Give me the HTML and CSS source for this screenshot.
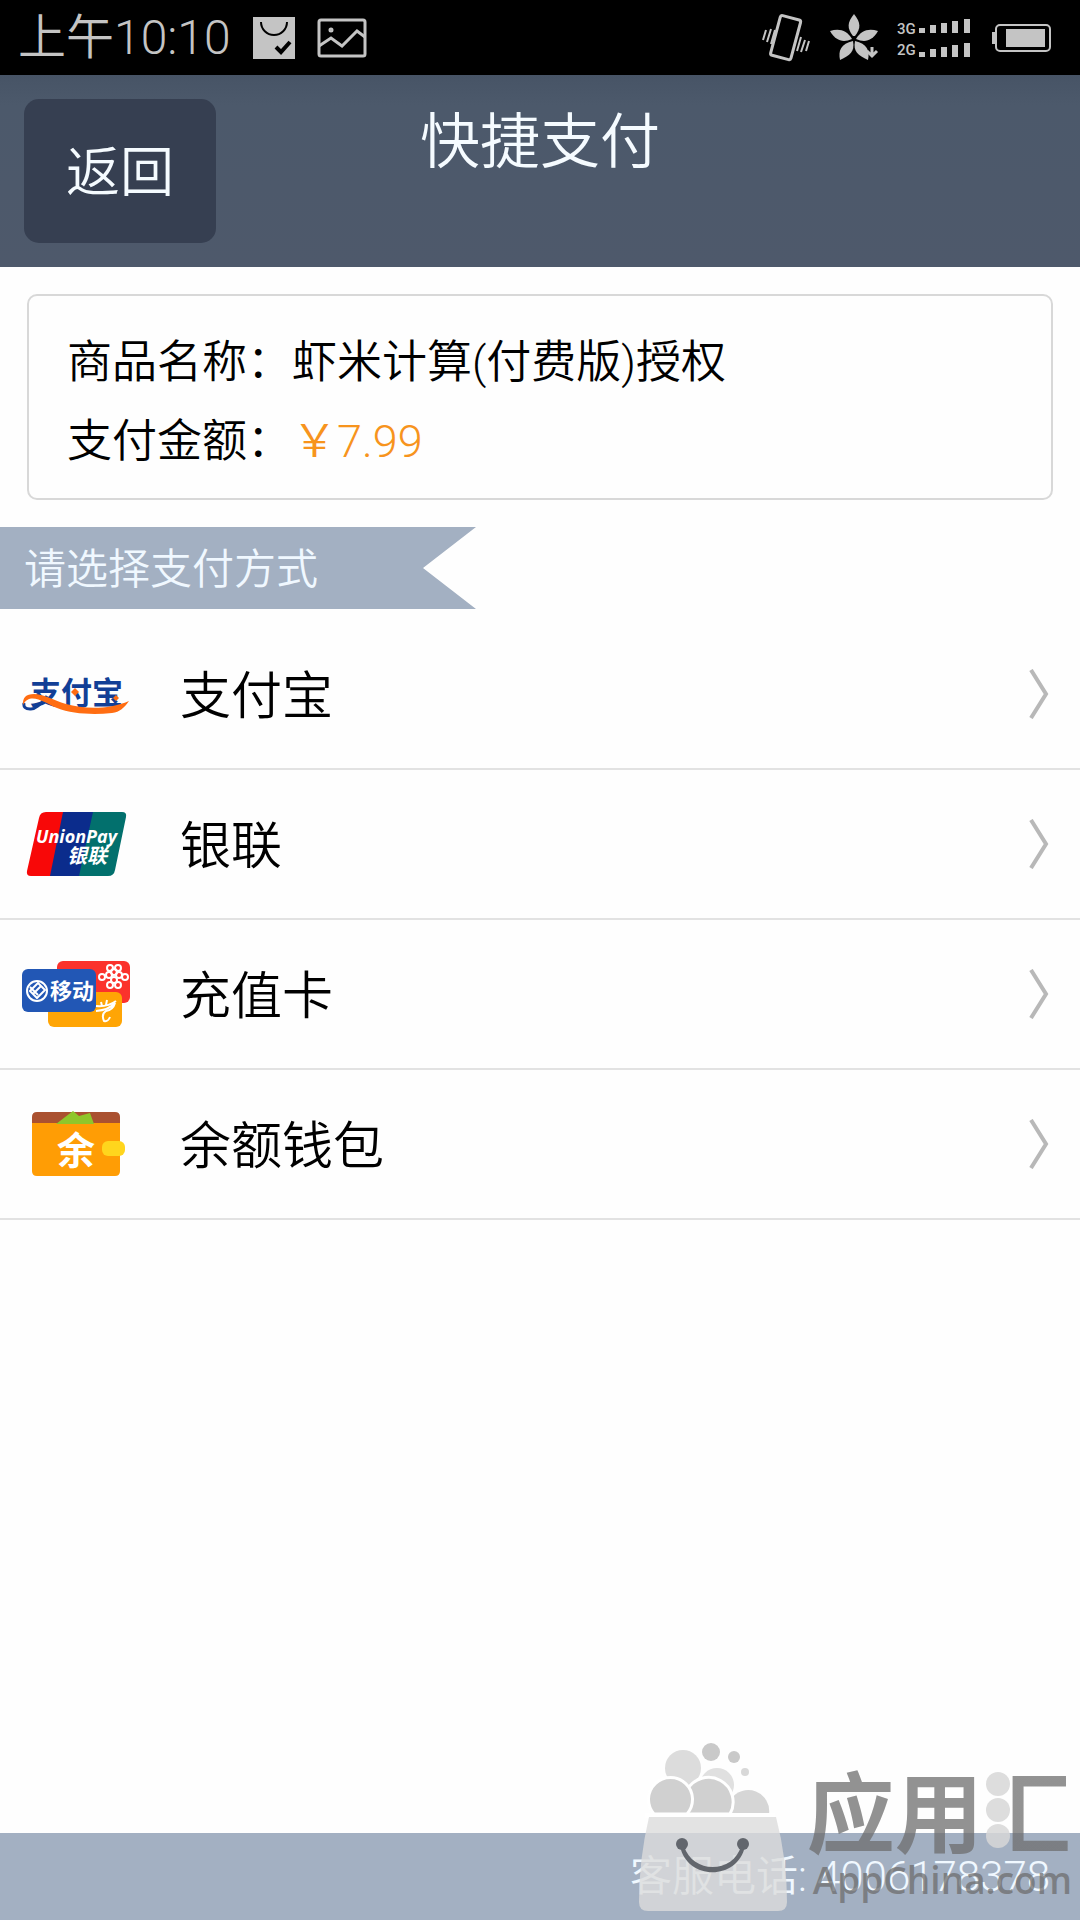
FILE: index.html
```html
<!DOCTYPE html>
<html lang="zh-CN">
<head>
    <meta charset="UTF-8">
    <meta name="viewport" content="width=device-width, initial-scale=1.0">
    <title>快捷支付</title>
    <link rel="stylesheet" href="styles.css">
</head>
<body>

<div class="status-bar">
    <div class="status-left">
        <span class="time">上午10:10</span>
        <svg class="status-icon" width="42" height="42" viewBox="0 0 42 42">
            <rect width="42" height="42" fill="#c4c4c4"/>
            <path d="M8 5a13 13 0 0 0 26 0" fill="none" stroke="#000" stroke-width="2"/>
            <path d="M23 30l5 5 9-10" fill="none" stroke="#000" stroke-width="4"/>
        </svg>
        <svg class="status-icon" width="50" height="40" viewBox="0 0 50 40" fill="none" stroke="#c4c4c4" stroke-width="3">
            <rect x="2" y="2" width="46" height="36" rx="2"/>
            <path d="M2 28l12-8 11 8 15-15 8 6"/>
            <circle cx="14" cy="12" r="1" fill="#c4c4c4"/>
        </svg>
    </div>
    <div class="status-right">
        <svg width="50" height="50" viewBox="0 0 50 50" fill="none" stroke="#c4c4c4">
            <rect x="14" y="4" width="21" height="41" rx="2" transform="rotate(15 24 25)" stroke-width="3"/>
            <path d="M5 17l-3 10M10 16l-4 13M14 17l-4 14M40 24l-4 14M44 27l-4 12M48 28l-3 10" stroke-width="2"/>
        </svg>
        <svg width="50" height="50" viewBox="0 0 50 50" fill="#c4c4c4">
            <path d="M25 1c-7 9-7 14-1 22h2c6-8 6-13-1-22z"/>
            <path d="M1 18c9-3 17-1 22 8-9 4-16 2-22-8z"/>
            <path d="M49 18c-9-3-17-1-22 8 9 4 16 2 22-8z"/>
            <path d="M11 47c-2-10 1-16 13-19 2 11-3 14-13 19z"/>
            <path d="M39 47c2-10-1-16-13-19-2 11 3 14 13 19z"/>
            <path d="M43 34v8M38 38l5 5 5-5" fill="none" stroke="#c4c4c4" stroke-width="3"/>
        </svg>
        <svg width="76" height="42" viewBox="0 0 76 42" fill="#c4c4c4">
            <text class="signal-text" x="0" y="17">3G</text>
            <text class="signal-text" x="0" y="38">2G</text>
            <path d="M22 11h6v5h-6zM33 8h6v8h-6zM44 6h6v10h-6zM55 4h6v12h-6zM67 2h6v14h-6z"/>
            <path d="M22 35h6v5h-6zM33 32h6v8h-6zM44 30h6v10h-6zM55 28h6v12h-6zM67 26h6v14h-6z"/>
        </svg>
        <svg width="60" height="28" viewBox="0 0 60 28">
            <rect x="5" y="1" width="54" height="26" rx="4" fill="none" stroke="#c4c4c4" stroke-width="2"/>
            <path d="M1 8h3v12h-3zM15 5h39v18h-39z" fill="#c4c4c4"/>
        </svg>
    </div>
</div>

<header class="header">
    <button type="button" class="back">返回</button>
    <h1 class="title">快捷支付</h1>
</header>

<main>
    <section class="order">
        <p>商品名称：虾米计算(付费版)授权</p>
        <p>支付金额：<span class="price">￥7.99</span></p>
    </section>

    <h2 class="ribbon">请选择支付方式</h2>

    <nav class="pay-list">
        <a class="pay-item" href="#alipay">
            <svg class="logo" width="108" height="68" viewBox="0 0 108 68">
                <text class="alipay-text" x="8" y="44">支付宝</text>
                <path d="M25 36Q15 50 8 49 1 49 2 43" fill="none" stroke="#123f96" stroke-width="3"/>
                <path d="M1 45Q0 34 12 34c9 0 19 6 32 10 18 5 42 6 63-3-5 7-9 11-17 12-19 2-40 1-55-5C23 43 8 31 1 45z" fill="#ff6d12"/>
                <path d="M53 28l4 4-4 4-4-4zM94 35l3 3-3 3-3-3z" fill="#ff6d12"/>
            </svg>
            <span class="pay-name">支付宝</span>
            <svg class="arrow" width="20" height="50" viewBox="0 0 20 50"><path d="M2 1l15 24L2 49"/></svg>
        </a>
        <a class="pay-item" href="#unionpay">
            <svg class="logo" width="108" height="68" viewBox="0 0 108 68">
                <path d="M24 2h18L29 66H9q-5 0-4-5L17 8q1-6 7-6z" fill="#f80808"/>
                <path d="M41 2h31L59 66H28z" fill="#0b2c8c"/>
                <path d="M71 2h29q5 0 4 5L93 60q-1 6-7 6H57z" fill="#02706d"/>
                <text class="union-text" x="14" y="33">UnionPay</text>
                <text class="union-cn" x="45" y="53">银联</text>
            </svg>
            <span class="pay-name">银联</span>
            <svg class="arrow" width="20" height="50" viewBox="0 0 20 50"><path d="M2 1l15 24L2 49"/></svg>
        </a>
        <a class="pay-item" href="#card">
            <svg class="logo" width="108" height="68" viewBox="0 0 108 68">
                <rect x="35" y="1" width="73" height="42" rx="6" fill="#fb322c"/>
                <rect x="26" y="32" width="74" height="35" rx="6" fill="#ffa505"/>
                <rect y="9" width="74" height="43" rx="6" fill="#2257b5"/>
                <g fill="none" stroke="#fff" stroke-width="2">
                    <circle cx="88" cy="8" r="3"/><circle cx="96" cy="8" r="3"/>
                    <circle cx="80" cy="17" r="3"/><circle cx="87" cy="15" r="3"/><circle cx="97" cy="15" r="3"/><circle cx="103" cy="17" r="3"/>
                    <circle cx="92" cy="12" r="3"/><circle cx="92" cy="20" r="3"/><circle cx="88" cy="25" r="3"/><circle cx="96" cy="25" r="3"/>
                    <circle cx="15" cy="31" r="10"/>
                    <path d="M8 31l8-8 7 7-8 8zM11 34l8-8M8 27l8 8"/>
                </g>
                <path d="M74 46q12 1 20-5M79 42l1 4M85 40l-1 5M74 51q13-1 19-8-2 7-9 8-5 3-2 10 4 1 6-4" fill="none" stroke="#fff" stroke-width="2"/>
                <text class="mobile-text" x="28" y="39">移动</text>
            </svg>
            <span class="pay-name">充值卡</span>
            <svg class="arrow" width="20" height="50" viewBox="0 0 20 50"><path d="M2 1l15 24L2 49"/></svg>
        </a>
        <a class="pay-item" href="#wallet">
            <svg class="logo" width="108" height="68" viewBox="0 0 108 68">
                <path d="M15 2h78q5 0 5 5v10H10V7q0-5 5-5z" fill="#aa5130"/>
                <path d="M10 13h88v48q0 5-5 5H15q-5 0-5-5z" fill="#ff9d05"/>
                <path d="M34 14L51 1l6 5 11-3 4 11z" fill="#8fc62b"/>
                <rect x="80" y="31" width="23" height="15" rx="6" fill="#ffd51d"/>
                <text class="wallet-text" x="35" y="54">余</text>
            </svg>
            <span class="pay-name">余额钱包</span>
            <svg class="arrow" width="20" height="50" viewBox="0 0 20 50"><path d="M2 1l15 24L2 49"/></svg>
        </a>
    </nav>
</main>

<footer class="footer">
    <span>客服电话: 4006178378</span>
</footer>

<!-- 水印 -->
<div class="watermark">
    <svg class="bag" width="152" height="170" viewBox="0 0 152 170">
        <g fill="#d0d0d0">
            <circle cx="74" cy="10" r="9" fill="#c9c9c9"/>
            <circle cx="97" cy="15" r="6" fill="#c9c9c9"/>
            <circle cx="108" cy="30" r="4" fill="#d8d8d8"/>
            <circle cx="46" cy="26" r="18" fill="#dcdcdc"/>
            <circle cx="80" cy="43" r="17" fill="#e0e0e0"/>
            <path d="M94 72V57a21 21 0 0 1 38 15z" fill="#d6d6d6"/>
            <path d="M50 72V48a22 22 0 1 1 43 24z" stroke="#fff" stroke-width="3"/>
            <path d="M17 72a22 22 0 1 1 33 0z" stroke="#fff" stroke-width="3"/>
        </g>
        <path d="M8 71h130v5H8z" fill="#fff"/>
        <path d="M12 75h127q11 42 11 85 0 9-9 9H11q-9 0-9-9Q2 117 12 75z" fill="#dcdcdc" fill-opacity=".8"/>
        <g fill="#62666d">
            <circle cx="45" cy="102" r="6"/>
            <circle cx="106" cy="102" r="6"/>
            <path d="M43 104h4c9 29 50 27 57 0h4c-7 35-58 35-65 0z"/>
        </g>
    </svg>
    <div class="brand">
        <div class="brand-cn">应用<span class="brand-hui">汇<svg class="dots" width="26" height="80" viewBox="0 0 26 80"><circle cx="13" cy="13" r="12"/><circle cx="13" cy="39" r="12"/><circle cx="13" cy="65" r="12"/></svg></span></div>
        <div class="brand-en">AppChina.com</div>
    </div>
</div>

</body>
</html>
```
FILE: styles.css
```css
* {
    box-sizing: border-box;
}
body {
    margin: 0;
    min-height: 100vh;
    display: flex;
    flex-direction: column;
    position: relative;
    background-color: #fefefe;
    color: #000;
    font-family: Roboto, "Noto Sans CJK SC", sans-serif;
    font-weight: 350;
}
h1, h2, p {
    margin: 0;
    font-weight: 350;
}
main {
    flex: 1;
}

/* 状态栏 */
.status-bar {
    display: flex;
    justify-content: space-between;
    align-items: center;
    height: 75px;
    padding: 0 29px 0 18px;
    background-color: #000;
    color: #c4c4c4;
}
.status-left, .status-right {
    display: flex;
    align-items: center;
}
.status-left {
    gap: 22px;
}
.status-right {
    gap: 18px;
}
.time {
    font-size: 48px;
    line-height: 72px;
}
.signal-text {
    font-family: Roboto, sans-serif;
    font-size: 15px;
    font-weight: 500;
}

/* 标题栏 */
.header {
    display: grid;
    grid-template-columns: 1fr auto 1fr;
    align-items: start;
    height: 192px;
    padding: 24px;
    background: linear-gradient(#475466, #4c596b 30px, #4e596b);
    color: #f5fbff;
}
.back {
    justify-self: start;
    width: 192px;
    height: 144px;
    padding: 0 0 6px;
    border: none;
    border-radius: 15px;
    background-color: #363f51;
    color: #f5fbff;
    font-family: inherit;
    font-size: 54px;
    font-weight: 350;
}
.title {
    font-size: 60px;
    line-height: 88px;
}

/* 订单信息 */
.order {
    margin: 27px 27px 27px;
    padding: 27px 38px 17px;
    border: 2px solid #d8d8d8;
    border-radius: 10px;
    font-size: 45px;
    line-height: 79px;
}
.price {
    color: #f7941d;
}
.ribbon {
    width: 476px;
    padding: 4px 0 0 24px;
    background-color: #a3b0c2;
    clip-path: polygon(0 0, 100% 0, 423px 50%, 100% 100%, 0 100%);
    color: #f0f8ff;
    font-size: 42px;
    line-height: 78px;
}

/* 支付方式 */
.pay-list {
    padding-top: 11px;
}
.pay-item {
    display: flex;
    align-items: center;
    height: 150px;
    padding: 0 31px 0 22px;
    border-bottom: 2px solid #e2e2e2;
    color: #000;
    text-decoration: none;
}
.pay-name {
    flex: 1;
    margin-left: 50px;
    padding-bottom: 4px;
    font-size: 51px;
}
.arrow {
    fill: none;
    stroke: #b8b8b8;
    stroke-width: 4;
}
.logo text {
    font-family: "Noto Sans CJK SC", sans-serif;
    font-weight: 700;
    fill: #fff;
}
.logo .alipay-text {
    font-size: 31px;
    fill: #123f96;
}
.logo .union-text {
    font-family: "Open Sans", sans-serif;
    font-size: 18px;
    font-style: italic;
}
.logo .union-cn {
    font-size: 20px;
    font-style: italic;
}
.logo .mobile-text {
    font-size: 22px;
}
.logo .wallet-text {
    font-size: 38px;
}

/* 底部 */
.footer {
    padding: 0 30px;
    background-color: #a3b0c2;
    color: #f0f8ff;
    font-size: 42px;
    line-height: 87px;
    text-align: right;
}

/* 水印 */
.watermark {
    position: absolute;
    right: 8px;
    bottom: 8px;
    display: flex;
    gap: 18px;
}
.brand {
    padding-top: 18px;
    color: rgba(110, 110, 110, 0.75);
    font-family: "Noto Sans CJK SC", sans-serif;
    font-weight: 700;
}
.brand-cn {
    font-size: 88px;
    line-height: 96px;
}
.brand-hui {
    position: relative;
    background: linear-gradient(90deg, transparent 33%, rgba(110, 110, 110, 0.75) 33%);
    background-clip: text;
    -webkit-background-clip: text;
    color: transparent;
}
.dots {
    position: absolute;
    left: 2px;
    bottom: 20px;
    fill: rgba(215, 215, 215, 0.85);
}
.brand-en {
    padding-left: 6px;
    font-family: "Open Sans", sans-serif;
    font-size: 37px;
    font-weight: 600;
    line-height: 48px;
}
```
